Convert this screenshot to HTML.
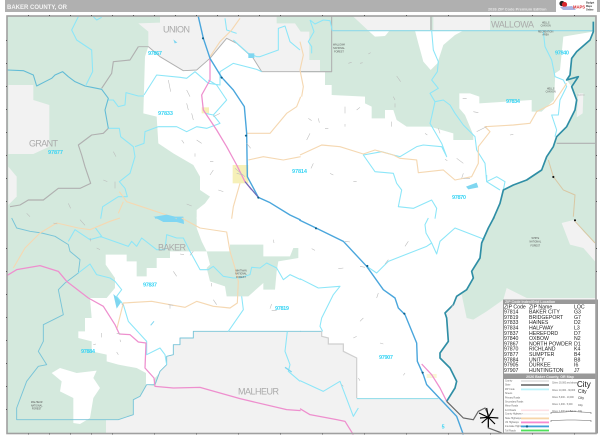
<!DOCTYPE html>
<html><head><meta charset="utf-8"><title>Baker County, OR</title>
<style>
html,body{margin:0;padding:0;background:#fff;width:600px;height:436px;overflow:hidden}
svg{display:block;font-family:"Liberation Sans",sans-serif;filter:blur(.35px)}
.c{fill:none;stroke:#8ce6f8;stroke-width:3.2;stroke-linejoin:round}
.t{fill:none;stroke:#62bcd6;stroke-width:3.2;stroke-linejoin:round}
.r{fill:none;stroke:#2f8ea5;stroke-width:5;stroke-linejoin:round}
.h{fill:none;stroke:#4aa6dc;stroke-width:4.2;stroke-linejoin:round}
.p{fill:none;stroke:#ee8fce;stroke-width:3.8;stroke-linejoin:round}
.o{fill:none;stroke:#f5d8b2;stroke-width:3.4;stroke-linejoin:round}
.g{fill:none;stroke:#b0b0b0;stroke-width:3.4;stroke-linejoin:round}
.d{fill:none;stroke:#bbb;stroke-width:1.7}
.z{fill:#38d4f4;font-size:5.6px;font-weight:bold}
.n{fill:#aaa;font-size:9px}
.f{fill:#555;font-size:2.4px;text-anchor:middle}
.l{fill:#222;font-size:5.2px}
.m{fill:#666;font-size:2.3px}
</style></head><body>
<svg width="600" height="436" viewBox="0 0 600 436" xmlns="http://www.w3.org/2000/svg">
<rect width="600" height="436" fill="#fff"/>
<rect x="5" y="0" width="595" height="12" fill="#b0b0b0"/>
<rect x="7" y="16" width="589" height="417" fill="#d4e9dd"/>

<!-- FILLS -->
<g transform="scale(.33333)">
<polygon fill="#f2f2f2" points="25,255 100,255 100,300 148,315 148,440 100,462 25,462"/>
<polygon fill="#f2f2f2" points="25,500 50,530 50,590 25,615"/>
<polygon fill="#f2f2f2" points="415,70 445,95 445,140 480,170 550,212 590,210 630,175 680,115 710,130 760,175 785,215 902,215 902,95 885,70 830,70 830,50 480,50 480,68"/>
<polygon fill="#fff" points="435,170 430,340 470,350 475,430 520,460 580,495 600,530 600,570 630,590 615,610 590,630 590,656 902,656 902,215 785,215 760,175 710,130 680,115 630,175 590,210 550,212 480,170 445,140"/>
<rect x="698" y="495" width="47" height="55" fill="#f6f0b8"/>
<rect x="605" y="322" width="22" height="18" fill="#f6f0b8"/>
</g>
<g transform="translate(300,0) scale(.33333)">
<polygon fill="#f2f2f2" points="-2,95 28,95 28,180 60,180 60,213 -2,213"/>
<polygon fill="#f2f2f2" points="160,50 390,50 390,90 270,90 258,105 225,110 205,92"/>
<polygon fill="#f2f2f2" points="400,50 570,50 570,90 400,90"/>
<polygon fill="#fff" points="205,92 268,92 255,108 225,110"/>
<polygon fill="#fff" points="345,92 355,130 370,185 392,210 412,190 430,135 465,105 490,92"/>
<polygon fill="#fff" points="-2,215 75,215 75,255 95,255 95,285 195,290 195,310 215,320 215,355 255,355 255,330 280,330 290,360 320,380 390,380 460,400 460,420 520,420 520,405 495,345 478,325 478,280 510,280 538,290 538,310 695,300 695,335 725,335 762,300 765,240 765,220 780,210 790,110 880,95 870,120 830,155 815,175 810,225 800,240 815,260 830,300 825,330 800,380 770,410 760,440 740,470 725,510 680,540 640,555 610,570 600,610 580,656 -2,656"/>
<polygon fill="#f2f2f2" points="835,280 850,280 848,340 830,352"/>
</g>
<g transform="translate(0,218) scale(.33333)">
<polygon fill="#fff" points="590,-2 590,30 605,70 620,100 510,100 510,120 470,120 470,150 440,150 440,175 410,175 410,130 380,130 380,110 317,110 317,140 345,180 345,210 320,240 270,240 275,300 255,300 255,340 235,340 235,360 275,370 275,400 320,410 320,430 355,440 410,450 438,465 438,500 460,500 465,480 500,440 500,415 520,410 520,380 540,380 540,360 580,360 580,340 902,340 902,-2"/>
<polygon fill="#d4e9dd" points="620,100 690,100 690,80 790,80 790,115 870,115 880,90 895,90 895,120 835,130 830,160 825,215 790,215 790,195 745,235 680,235 675,205 630,190 620,150 630,140"/>
<polygon fill="#f2f2f2" points="465,505 480,460 500,440 500,415 520,410 520,380 540,380 540,360 580,360 580,340 902,340 902,647 318,647 318,605 355,605 400,590 400,545 420,535 440,500"/>
<polygon fill="#fff" points="155,465 180,450 230,465 290,458 280,480 300,510 280,540 270,600 240,618 220,615 220,540 180,520 185,490"/>
<polygon fill="#80d6f2" points="460,-4 550,-4 552,18 530,12 490,12"/>
<path d="M340,228 365,250 350,272 345,250Z" fill="#7fd6f0"/>
</g>
<g transform="translate(300,218) scale(.33333)">
<polygon fill="#f2f2f2" points="-2,340 65,340 65,355 85,360 85,378 130,378 130,400 170,420 170,540 415,540 440,550 465,510 470,490 450,450 420,420 420,405 445,370 440,300 435,285 460,260 470,235 485,230 500,300 520,305 560,280 610,245 620,210 680,240 887,240 887,647 -2,647"/>
<polygon fill="#fff" points="-2,-2 582,-2 565,30 545,75 540,120 515,160 520,180 500,215 470,235 460,260 435,285 440,300 445,370 420,405 420,420 450,450 470,490 465,510 440,550 415,540 170,540 170,420 130,400 130,378 85,378 85,360 65,355 65,340 -2,340"/>
<polygon fill="#f2f2f2" points="785,15 825,5 850,40 885,75 885,130 850,90 810,80"/>
<rect x="380" y="468" width="30" height="12" fill="#f6f0b8" opacity=".6"/>
</g>

<!-- LINES -->
<g transform="scale(.33333)">
<path class="g" d="M415,140 390,180 340,185 335,220 305,265M325,385 310,400 275,405 235,435 245,465 255,500 272,550 240,565 175,565 130,600 85,600 60,615 30,620"/>
<path class="g" d="M415,140 445,140 480,170 550,212 590,210 630,175 680,115 710,130 760,175 785,215 902,215" style="stroke-width:2.8"/>
<path class="c" d="M235,50 215,90 230,120 275,150 278,215 258,255M280,50 290,60 305,52M325,385 358,385 362,410 400,440 405,470 390,520 358,545 375,565 382,590 355,590 308,620 302,656M432,288 415,288 378,278 375,315 355,320 340,300 322,300M432,285 470,225 540,232 560,235 585,215 625,250 660,255 660,215 700,190 770,208 785,215M625,240 650,255 680,300 640,345 615,340M475,380 435,395 432,430 405,440M475,380 530,380 560,395 590,380 620,385 660,370 640,345M675,55 680,90 710,100M700,120 745,160 770,170 780,170 835,150 835,85 855,78 870,125 900,150"/>
<path class="t" d="M22,210 70,212 100,225 110,258 135,245 155,235 165,225 188,215 205,230 225,245 255,258 275,262 305,268 325,295 315,330 325,385"/>
<path class="o" d="M720,55 695,90 660,125 630,170M740,400 810,400 835,370 860,340 890,320 902,290M745,480 790,470 850,480 902,470M720,550 700,620 695,656M358,575 380,605 440,625 500,645 530,656M370,605 355,640"/>
<path class="p" d="M630,175 630,240 605,285 610,330 650,390 680,440 710,495 735,545 755,570"/>
<path class="h" d="M595,50 610,115 630,175 665,232 700,270 733,320 740,400 742,530 775,592 810,608 870,645 902,660"/>
<path d="M735,545 775,592" fill="none" stroke="#6a6ab8" stroke-width="3.5"/>
<path class="d" d="M505,240 512,275M560,270 570,290M560,310 565,330M575,340 580,360M545,420 552,430M590,420 605,430M640,350 660,340M740,430 752,445M705,505 735,530M710,520 730,525M340,455 348,470M310,540 322,545M345,545 345,565M205,610 212,625M80,640 90,650M560,612 575,618M585,460 585,470M630,525 640,510M655,570 670,575M630,485 640,485"/>
<path d="M520,118 532,128 524,130Z" fill="#7fd6f0"/>
<rect x="745" y="160" width="18" height="14" fill="#7fd6f0"/>
<circle cx="609" cy="115" r="3.2" fill="#0d5f8a"/><circle cx="665" cy="233" r="3.2" fill="#0d5f8a"/><circle cx="738" cy="407" r="3.2" fill="#0d5f8a"/><circle cx="775" cy="593" r="3.2" fill="#0d5f8a"/>
<path d="M465,650 500,644 525,650 530,656 465,656Z" fill="#80d6f2"/>
</g>
<g transform="translate(300,0) scale(.33333)">
<path class="g" d="M0,215 95,215 95,50M393,50 393,90M770,430 885,430" style="stroke-width:3.2"/>
<path d="M97,92 880,92" fill="none" stroke="#8fd9e8" stroke-width="3.6"/>
<path class="c" d="M30,60 45,72 70,60 90,62 97,92M30,60 42,95 25,125 35,140 35,160M395,92 400,150 415,185 412,215 395,240 415,265 390,280 405,305 395,350 390,370 425,430 440,470 425,440 370,435 350,440 300,470 280,465 245,455 190,465 225,515 280,520 290,550 305,570 295,620 340,625 395,600 410,625 405,656M405,305 430,300 450,315 465,340 490,375 525,410 530,450 555,490 560,545 590,530 615,545 610,570M560,525 560,545 600,570M730,95 735,140 755,180 765,230 790,240 800,260 780,300 775,345 755,345 770,390 765,410"/>
<path class="o" d="M0,465 65,435 120,440 190,462 225,450 280,465 300,475 350,480 355,518 430,510 465,540 515,530 535,490 535,440 570,395 555,380 640,375 690,370 710,335 760,310 800,250M0,125 10,165 0,210 10,260 5,290"/>
<path fill="none" stroke="#d9c7a3" stroke-width="3" d="M745,480 760,530 790,570 825,585 820,650"/>
<path class="r" d="M880,65 880,95 870,120 830,155 815,175 810,225 800,240 835,230 815,260 830,300 825,330 800,380 770,410 760,440 740,470 725,510 680,540 640,555 610,570 600,610 580,656"/>
<path d="M498,560 530,548 535,562 505,568Z" fill="#7fd6f0"/>
<circle cx="760" cy="531" r="3.2" fill="#111"/>
<path class="d" d="M145,190 155,187M180,190 188,188M205,162 212,158M290,228 302,245M280,290 285,300M285,310 285,322M135,320 135,340M170,330 180,322M55,355 58,368M25,355 35,362M75,385 85,385M135,380 135,372M30,400 20,420M275,365 275,380M375,400 382,405M470,475 490,490M490,520 485,535M435,478 442,482M530,395 560,380M520,335 535,338M488,295 500,295M630,405 640,403M40,490 33,505M90,520 100,525M160,545 170,545M490,535 510,535M415,385 420,400"/>
<text class="f" x="117" y="137" style="font-size:7.2px">WALLOWA</text>
<text class="f" x="117" y="147" style="font-size:7.2px">NATIONAL</text>
<text class="f" x="117" y="157" style="font-size:7.2px">FOREST</text>
<text class="f" x="737" y="70" style="font-size:7.2px">HELLS</text><text class="f" x="737" y="80" style="font-size:7.2px">CANYON</text><text class="f" x="737" y="97" style="font-size:7.2px">RECREATION</text><text class="f" x="737" y="107" style="font-size:7.2px">AREA</text>
<text class="f" x="752" y="268" style="font-size:7.2px">HELLS</text><text class="f" x="752" y="278" style="font-size:7.2px">CANYON</text>
<text x="843" y="288" style="font-size:7.2px;text-anchor:middle;fill:#bbb">IDAHO</text>
</g>
<g transform="translate(0,218) scale(.33333)">
<path class="t" d="M35,0 50,30 90,40 125,45 165,55 205,80 210,100 240,125 235,165 195,195 175,215 190,290 130,320 130,370 115,400 140,440 115,445 80,490 50,570 50,605 355,605 400,590 400,545 420,535 440,500 465,500 480,460 500,440 500,415 520,410 520,380 540,380 540,360 580,360 580,340 902,340" style="stroke:#78c4d8;stroke-width:2.8"/>
<path class="c" d="M285,28 305,55 270,65 225,35 205,70M300,55 385,85 395,70 410,85 425,60 470,95 495,95 500,50 530,60 550,60 570,100 600,155 625,155 640,145 670,175 700,180 720,180 750,170 755,148 780,150 800,135 830,150 850,185 870,170 902,185M235,165 270,138 290,170 330,180 345,190 365,215 350,235 370,260 385,310 440,370 440,410 480,390 495,410 500,440M725,235 730,275 685,340M862,340 855,400 870,440 865,460 900,490"/>
<path d="M452,322 462,310" stroke="#7fd6f0" stroke-width="3"/>
<path d="M855,448 875,462" stroke="#7fd6f0" stroke-width="4"/>
<path class="o" d="M40,150 75,90 120,45 170,15 235,30 270,35 330,10 360,0M545,0 600,30 680,42 690,100 705,150 715,190 712,255 690,270 640,265 590,250 555,268 510,260 455,250 370,255 350,335"/>
<path class="p" d="M22,172 50,155 120,143 175,160 200,190 265,240 310,265 345,320 358,348 390,350 415,372 438,375 435,450 462,480 465,505 520,510 600,508 720,542 860,575 902,578"/>
<path class="d" d="M240,5 255,22M160,15 172,18M290,90 300,95M270,60 272,70M520,160 530,175M635,195 635,205M640,245 650,260M505,260 520,262M510,262 510,272M365,258 372,262M350,347 362,347M305,345 305,358M280,380 288,378M350,402 355,410M360,365 362,372M815,258 810,272M815,278 830,278M580,100 570,112M540,108 552,110M820,65 822,75"/>
<text class="f" x="110" y="555" style="font-size:7.2px">MALHEUR</text><text class="f" x="110" y="565" style="font-size:7.2px">NATIONAL</text><text class="f" x="110" y="575" style="font-size:7.2px">FOREST</text>
<text class="f" x="723" y="160" style="font-size:7.2px">WHITMAN</text><text class="f" x="723" y="170" style="font-size:7.2px">NATIONAL</text><text class="f" x="723" y="180" style="font-size:7.2px">FOREST</text>
</g>
<g transform="translate(300,218) scale(.33333)">
<path d="M0,340 65,340" stroke="#78c4d8" stroke-width="2.8" fill="none"/>
<path d="M65,340 65,355 85,360 85,378 130,378 130,400 170,420 170,540" fill="none" stroke="#cfcfcf" stroke-width="3.6"/>
<path d="M170,542 415,542" stroke="#8cdcea" stroke-width="3" fill="none"/>
<path class="c" d="M0,182 55,210 120,205 100,230 65,300 60,325 68,340M200,145 230,165 265,130 380,85 395,75 410,108 420,70 465,30 555,65M385,0 375,20 378,45 395,75M0,488 70,520 120,490 160,595 175,570"/>
<path class="p" d="M0,572 30,590 110,605 135,610 160,650M365,438 395,470 420,510 440,550"/>
<path class="h" d="M-2,6 48,30 130,70 200,145 250,215 285,240 295,270 315,290 350,375 352,430 370,470 380,500 470,595 490,650"/>
<path class="r" d="M582,-2 565,30 545,75 540,120 515,160 520,180 500,215 470,235 460,260 435,285 440,300 445,370 420,405 420,420 450,450 470,490 465,510 440,550"/>
<path d="M440,550 490,600 520,605 535,580 555,570 565,590 565,630 605,645" fill="none" stroke="#666" stroke-width="3.6"/>
<circle cx="48" cy="31" r="3.2" fill="#0d5f8a"/><circle cx="202" cy="144" r="3.2" fill="#0d5f8a"/><circle cx="313" cy="287" r="3.2" fill="#0d5f8a"/><circle cx="368" cy="464" r="3.2" fill="#0d5f8a"/>
<circle cx="825" cy="7" r="3.2" fill="#111"/>
<path d="M825,10 885,75" fill="none" stroke="#d9c7a3" stroke-width="3"/>
<path class="d" d="M135,70 150,72M35,92 45,97M130,150 115,152M265,125 255,138M180,145 195,148M235,225 230,240M325,70 315,85M190,300 180,310M240,375 250,378M170,355 160,360M315,465 310,472M175,480 180,488M125,500 130,505M460,260 455,268"/>
<text class="f" x="706" y="63" style="font-size:7.2px">WHITE</text><text class="f" x="706" y="73" style="font-size:7.2px">NATIONAL</text><text class="f" x="706" y="85" style="font-size:7.2px">FOREST</text>
<text x="425" y="632" style="font-size:16px;fill:#38d4f4;font-weight:bold">5</text>
<g stroke="#000" fill="none">
<path d="M565,598 537,585M565,598 545,615M565,598 580,572M565,598 595,600M565,598 585,618M565,598 560,570M565,598 565,628M565,598 540,600" stroke-width="3.4"/>
</g>
</g>

<!-- legend -->
<rect x="503" y="299.500" width="95" height="134" fill="#999"/>
<rect x="504" y="304" width="92.500" height="69.500" fill="#fff"/>
<rect x="504" y="379" width="92.500" height="53.500" fill="#fff"/>
<text x="505" y="303" style="font-size:3.6px;fill:#eee;font-weight:bold">ZIP Code Index/Grid Location</text>
<text x="550" y="377.800" style="font-size:3.6px;fill:#eee;font-weight:bold;text-anchor:middle">2026 Baker County, OR Map</text>
<g transform="translate(0,-1.200)">
<text class="l" x="504" y="309.500">ZIP Code</text><text class="l" x="529" y="309.500">ZIP Name</text><text class="l" x="574" y="309.500">LOC</text>
<text class="l" x="504" y="314.800">97814</text><text class="l" x="529" y="314.800">BAKER CITY</text><text class="l" x="574" y="314.800">G3</text>
<text class="l" x="504" y="320.100">97819</text><text class="l" x="529" y="320.100">BRIDGEPORT</text><text class="l" x="574" y="320.100">G7</text>
<text class="l" x="504" y="325.400">97833</text><text class="l" x="529" y="325.400">HAINES</text><text class="l" x="574" y="325.400">D2</text>
<text class="l" x="504" y="330.700">97834</text><text class="l" x="529" y="330.700">HALFWAY</text><text class="l" x="574" y="330.700">L3</text>
<text class="l" x="504" y="336">97837</text><text class="l" x="529" y="336">HEREFORD</text><text class="l" x="574" y="336">D7</text>
<text class="l" x="504" y="341.300">97840</text><text class="l" x="529" y="341.300">OXBOW</text><text class="l" x="574" y="341.300">N2</text>
<text class="l" x="504" y="346.600">97867</text><text class="l" x="529" y="346.600">NORTH POWDER</text><text class="l" x="574" y="346.600">D1</text>
<text class="l" x="504" y="351.900">97870</text><text class="l" x="529" y="351.900">RICHLAND</text><text class="l" x="574" y="351.900">K4</text>
<text class="l" x="504" y="357.200">97877</text><text class="l" x="529" y="357.200">SUMPTER</text><text class="l" x="574" y="357.200">B4</text>
<text class="l" x="504" y="362.500">97884</text><text class="l" x="529" y="362.500">UNITY</text><text class="l" x="574" y="362.500">B8</text>
<text class="l" x="504" y="367.800">97905</text><text class="l" x="529" y="367.800">DURKEE</text><text class="l" x="574" y="367.800">I6</text>
<text class="l" x="504" y="373">97907</text><text class="l" x="529" y="373">HUNTINGTON</text><text class="l" x="574" y="373">J7</text>
</g>
<g>
<text class="m" x="505" y="381.500">County</text><text class="m" x="505" y="385.500">State</text><text class="m" x="505" y="390">ZIP Code</text><text class="m" x="505" y="394">Streets</text><text class="m" x="505" y="398.500">Primary Roads</text><text class="m" x="505" y="402.500">Secondary Roads</text><text class="m" x="505" y="406.500">Minor Roads</text><text class="m" x="505" y="411">4x4 Roads</text><text class="m" x="505" y="414.500">County Highways</text><text class="m" x="505" y="419">State Highways</text><text class="m" x="505" y="423">US Highways</text><text class="m" x="505" y="427">Interstate Highways</text><text class="m" x="505" y="431.500">Toll Roads</text>
<rect x="521" y="380.500" width="28" height="1" fill="#ccc"/>
<rect x="521" y="384" width="28" height="2" fill="#888"/>
<rect x="521" y="388.500" width="28" height="1.800" fill="#bdf3fa"/>
<rect x="521" y="409.500" width="28" height="1.600" fill="#fde0e4"/>
<rect x="521" y="413.500" width="28" height="1" fill="#eee"/>
<rect x="521" y="417.500" width="28" height="1.800" fill="#f7d5a8"/>
<rect x="521" y="421.500" width="28" height="1.800" fill="#f58ad0"/>
<rect x="521" y="425.500" width="28" height="1.800" fill="#3f9fd8"/>
<circle cx="527" cy="426.400" r="1.200" fill="#0d5f8a"/>
<rect x="521" y="429.600" width="28" height="1.800" fill="#4fe05a"/>
<text class="m" x="552" y="383.500">Cities: 30,000 and above</text><text class="m" x="552" y="391">Cities: 10,000 - 30,000</text><text class="m" x="552" y="398">Cities: 5,000 - 10,000</text><text class="m" x="552" y="405">Cities: 1,000 - 5,000</text><text class="m" x="552" y="412">Cities: 1,000 and Below</text>
<text x="577" y="387" style="font-size:8px;fill:#111">City</text><text x="578" y="393" style="font-size:5px;fill:#222">City</text><text x="578" y="399" style="font-size:3.5px;fill:#333">City</text><text x="578" y="406" style="font-size:2.8px;fill:#444">City</text><text x="578" y="412" style="font-size:2.4px;fill:#444">City</text>
<path d="M551,414 551,412.500 565,412 571,411.500 591,412.500 591,414M551,422 551,420.500 567,420 575,420 591,420.500 591,422" fill="none" stroke="#666" stroke-width=".6"/>
</g>

<!-- border -->
<rect x="7" y="16" width="589" height="417.500" fill="none" stroke="#a0a0a0" stroke-width="1.600"/>
<path d="M28,15.500h1M49,15.500h1M70,15.500h1M91,15.500h1M112,15.500h1M133,15.500h1M154,15.500h1M175,15.500h1M196,15.500h1M217,15.500h1M238,15.500h1M259,15.500h1M280,15.500h1M322,15.500h1M364,15.500h1M406,15.500h1M448,15.500h1M490,15.500h1M532,15.500h1M574,15.500h1M28,434h1M49,434h1M70,434h1M91,434h1M112,434h1M154,434h1M196,434h1M238,434h1M280,434h1M322,434h1M364,434h1M406,434h1M448,434h1M490,434h1M532,434h1M574,434h1M6.500,40v1M6.500,63v1M6.500,86v1M6.500,109v1M6.500,132v1M6.500,155v1M6.500,178v1M6.500,201v1M6.500,248v1M6.500,271v1M6.500,294v1M6.500,317v1M6.500,340v1M6.500,363v1M6.500,386v1M6.500,409v1M596.500,40v1M596.500,63v1M596.500,86v1M596.500,109v1M596.500,132v1M596.500,155v1M596.500,178v1M596.500,201v1M596.500,248v1M596.500,271v1" stroke="#555" stroke-width="1"/>

<!-- labels -->
<text x="7" y="8.800" style="font-size:6px;font-weight:bold;fill:#f4f4f4">BAKER COUNTY, OR</text>
<text x="488" y="10.700" style="font-size:3.900px;font-weight:bold;fill:#e8e8e8">2026 ZIP Code Premium Edition</text>
<rect x="556" y="0" width="41" height="12.500" fill="#fff"/>
<circle cx="562" cy="3.500" r="2.600" fill="#222"/><circle cx="564.500" cy="4.500" r="2.600" fill="#d8262c"/>
<path d="M560,7 572,6 576,10 563,10Z" fill="#aab4e0"/>
<text x="573" y="8.300" style="font-size:4.200px;font-weight:bold;fill:#d8262c">MAPS</text>
<text x="586" y="3.500" style="font-size:2.400px;font-weight:bold;fill:#333">Budget</text><text x="586" y="7" style="font-size:2.400px;font-weight:bold;fill:#333">Maps</text><text x="586" y="10.500" style="font-size:2.400px;font-weight:bold;fill:#333">Online</text>

<text class="n" x="163" y="32.500" textLength="27">UNION</text>
<text class="n" x="29" y="146.500" textLength="29">GRANT</text>
<text class="n" x="158" y="250.500" textLength="28">BAKER</text>
<text class="n" x="238" y="394.500" textLength="41">MALHEUR</text>
<text class="n" x="491" y="27.500" textLength="43">WALLOWA</text>

<text class="z" x="148" y="55" textLength="14">97867</text>
<text class="z" x="158" y="115" textLength="15">97833</text>
<text class="z" x="48" y="154" textLength="15">97877</text>
<text class="z" x="292" y="173" textLength="15">97814</text>
<text class="z" x="506" y="103" textLength="14">97834</text>
<text class="z" x="555" y="54.500" textLength="14">97840</text>
<text class="z" x="452" y="199" textLength="14">97870</text>
<text class="z" x="143" y="286.500" textLength="14">97837</text>
<text class="z" x="81" y="353" textLength="14">97884</text>
<text class="z" x="275" y="310" textLength="14">97819</text>
<text class="z" x="379" y="359" textLength="14">97907</text>
</svg>
</body></html>
